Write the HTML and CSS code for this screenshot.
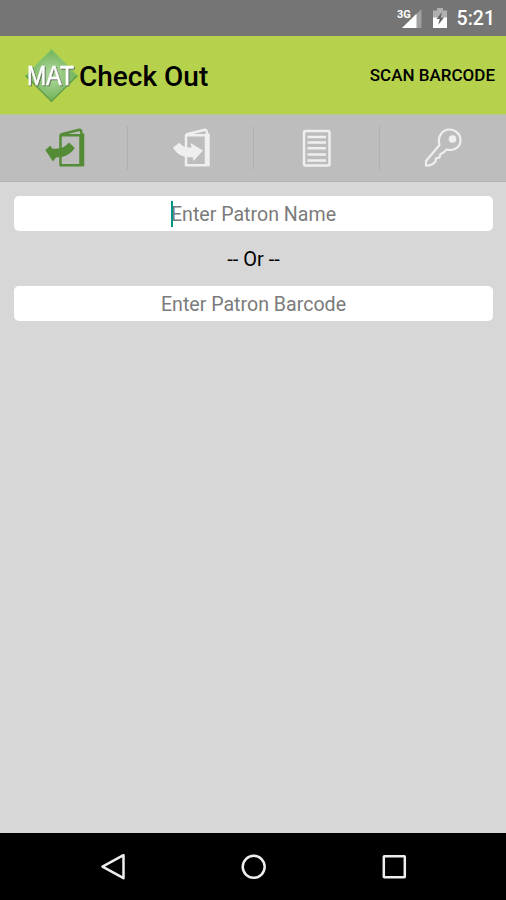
FILE: index.html
```html
<!DOCTYPE html>
<html lang="en">
<head>
  <meta charset="UTF-8">
  <title>Check Out</title>
  <link rel="stylesheet" href="styles.css">
</head>
<body>
  <div class="screen">
    <div class="status">
      <svg class="signal" width="28" height="24" viewBox="396 6 28 24">
        <path d="M421.500 9V28H402Z" fill="#a0a0a0"/>
        <path d="M416.500 13.800V28H402Z" fill="#fff"/>
        <text x="397" y="17.500" class="network">3G</text>
      </svg>
      <svg class="battery" width="16" height="24" viewBox="432 6 16 24">
        <path d="M437 8h6v2.500h4V18h-14v-7.500h4z" fill="#b0b0b0"/>
        <path d="M433 17.500h14V28h-14z" fill="#fff"/>
        <path d="M442 12l-5.500 7h3.200l-1.500 6 5.800-7.500h-3.200z" fill="#666"/>
      </svg>
      <span class="clock">5:21</span>
    </div>

    <div class="header">
      <svg class="logo" width="56" height="56" viewBox="24 47 56 56">
        <defs>
          <radialGradient id="gem">
            <stop offset="0" stop-color="#b5dba5"/>
            <stop offset="1" stop-color="#6fb255"/>
          </radialGradient>
        </defs>
        <path d="M51.500 49L77.500 75.500 51.500 101.500 25.500 75.500Z" fill="url(#gem)"/>
        <path d="M25.500 75.500L51.500 101.500 77.500 75.500" fill="none" stroke="#5d9a45" stroke-width="1.200"/>
        <path d="M51.500 50L26.500 75.500M51.500 50L76.500 75.500" stroke="#8bc873"/>
        <text x="27" y="85" textLength="47" lengthAdjust="spacingAndGlyphs" class="logo-text">MAT</text>
      </svg>
      <h1>Check Out</h1>
      <span class="scan">SCAN BARCODE</span>
    </div>

    <div class="tabs">
      <div class="tab active">
        <svg width="44" height="44" viewBox="42 126 44 44">
          <path class="line" d="M59.500 135.200H79.500V165.200H59.500ZM59.500 134.500L78.500 129.700Q80.500 129.500 80.500 134"/>
          <path class="spine" d="M81.500 133.500V166.300"/>
          <path class="arrow" d="M44.300 150L49.500 145.500 51 148.500C58 149.500 64 147.500 68 142.500L73.800 148C69.500 154.500 63 157.500 55 157.500L52 161.500Z"/>
        </svg>
      </div>
      <div class="tab">
        <svg width="44" height="44" viewBox="169 126 44 44">
          <path class="line" d="M186 135.200H206V165.200H186ZM186 134.500L205 129.700Q207 129.500 207 134"/>
          <path class="spine" d="M208 133.500V166.300"/>
          <path class="arrow" d="M173 147.500L179.500 142.800C182.500 147 186 148 191.500 147.500L190.500 143 203 150.500 193.500 161 192.500 157C184 158 177 155 173 147.500Z"/>
        </svg>
      </div>
      <div class="tab">
        <svg width="44" height="44" viewBox="295 126 44 44">
          <rect class="line" x="304" y="131" width="25.500" height="34.500" rx="1.500"/>
          <path class="line" d="M307.500 136.900H326M307.500 142.600H326M307.500 148.300H326M307.500 154.500H326M307.500 160.500H326"/>
        </svg>
      </div>
      <div class="tab">
        <svg width="44" height="44" viewBox="422 126 44 44">
          <path class="line thin" d="M440.500 145C438 136.500 443.500 129.500 450.500 129.500C457 129.500 461.500 134.500 461.500 140C461.500 147 455.500 151.500 447.500 149.500L444.500 152.500 441.500 154 440.500 157.500 437 158.500 436.500 161.500C434 164.500 431 166 427 165.500V161Z"/>
          <circle class="hole" cx="453.500" cy="139" r="3.800"/>
        </svg>
      </div>
    </div>

    <div class="form">
      <div class="field"><span class="hint focused">Enter Patron Name</span></div>
      <div class="or">-- Or --</div>
      <div class="field"><span class="hint">Enter Patron Barcode</span></div>
    </div>

    <div class="nav">
      <svg width="28" height="28" viewBox="99 853 28 28"><path d="M102.500 866.700L123.500 855.200V878.200Z"/></svg>
      <svg width="28" height="28" viewBox="239.500 853 28 28"><circle cx="253.200" cy="866.800" r="11"/></svg>
      <svg width="28" height="28" viewBox="380 853 28 28"><rect x="383.800" y="856.300" width="21" height="21" rx=".5"/></svg>
    </div>
  </div>
</body>
</html>
```
FILE: styles.css
```css
body {
  margin: 0;
  font-family: Roboto, sans-serif;
}
.screen {
  display: flex;
  flex-direction: column;
  height: 900px;
  overflow: hidden;
  background: #d7d7d7;
}
.status {
  display: flex;
  align-items: center;
  justify-content: flex-end;
  box-sizing: border-box;
  height: 36px;
  padding-right: 11px;
  background: #757575;
  color: #fff;
}
.battery {
  margin: 0 9px 0 8px;
}
.network {
  font-size: 11px;
  font-weight: 700;
  fill: #fff;
}
.clock {
  font-size: 19.500px;
  font-weight: 500;
  line-height: 36px;
  padding-top: 2px;
}
svg {
  overflow: visible;
}
.header {
  display: flex;
  align-items: center;
  box-sizing: border-box;
  height: 79px;
  padding: 0 11px 0 24px;
  background: #b6d24c;
  border-bottom: 1px solid #b9c58a;
}
h1 {
  flex: 1;
  margin: 2px 0 0 -1px;
  font-size: 28px;
  font-weight: 500;
}
.logo-text {
  font-family: "Liberation Sans", sans-serif;
  font-size: 27px;
  fill: #fff;
  stroke: #fff;
  stroke-width: .5px;
  filter: drop-shadow(1px 1px 0 #64785d);
}
.scan {
  font-size: 17px;
  font-weight: 500;
}
.tabs {
  display: flex;
  box-sizing: border-box;
  height: 67px;
  padding-left: 2px;
  background: #bdbdbd;
  border-bottom: 1px solid #b5b5b5;
}
.tab {
  display: flex;
  flex: 1;
  align-items: center;
  justify-content: center;
  background: linear-gradient(#b0b0b0, #b0b0b0) right center / 1px 44px no-repeat;
  fill: #efefef;
  stroke: #efefef;
}
.tab:last-child {
  background: none;
}
.tab.active {
  fill: #548b36;
  stroke: #548b36;
}
.line {
  fill: none;
  stroke-width: 2.500px;
  stroke-linejoin: round;
}
.thin {
  stroke-width: 2.200px;
}
.spine {
  stroke-width: 3.500px;
}
.arrow,
.hole {
  stroke: none;
}
.form {
  flex: 1;
  padding: 14px 13px 0 14px;
  text-align: center;
  font-size: 20px;
}
.field {
  height: 35px;
  line-height: 38px;
  border-radius: 5px;
  background: #fff;
  color: #7b7b7b;
  font-size: 19.600px;
}
.focused {
  position: relative;
}
/* text cursor */
.focused::before {
  content: "";
  position: absolute;
  left: 0;
  top: -2px;
  width: 2px;
  height: 26px;
  background: #009688;
}
.or {
  height: 55px;
  line-height: 57px;
}
.nav {
  display: flex;
  align-items: center;
  justify-content: space-between;
  box-sizing: border-box;
  height: 67px;
  padding: 0 98px 0 99px;
  background: #000;
  fill: none;
  stroke: #eee;
  stroke-width: 2.500px;
  stroke-linejoin: round;
}
```
